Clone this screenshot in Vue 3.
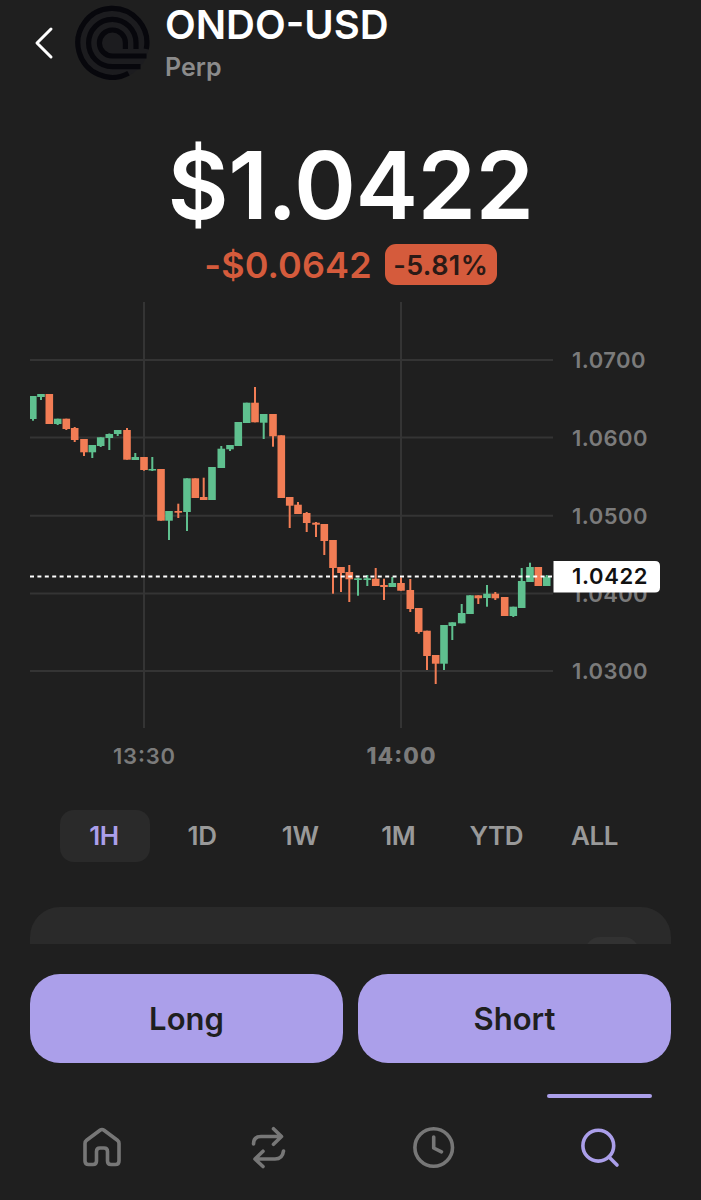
<template>
  <div class="app">
    <header class="header">
      <svg class="back" width="20" height="34" viewBox="0 0 20 34">
        <path d="M17 3 L3 17 L17 31" />
      </svg>
      <svg class="logo" width="75" height="75" viewBox="0 0 75 75">
        <circle class="disc" cx="37.3" cy="37.7" r="37" />
        <path d="M71.300 44 A34.500 34.500 0 1 0 53.500 68.300" />
        <path d="M61 44 V37.800 A23.700 23.700 0 1 0 37.300 61.700 H65.500" />
        <path d="M50.400 44 V37.800 A13 13 0 1 0 37.300 51 H71.500" />
      </svg>
      <div class="names">
        <div class="title">ONDO-USD</div>
        <div class="kind">Perp</div>
      </div>
    </header>

    <div class="price">$1.0422</div>
    <div class="change">
      <span class="diff">-$0.0642</span>
      <span class="badge">-5.81%</span>
    </div>

    <!-- K线图 -->
    <svg class="chart" width="701" height="485" viewBox="0 300 701 485">
      <g class="grid">
        <line v-for="p in prices" :key="p.label" x1="30" x2="553" :y1="p.y" :y2="p.y" />
        <line v-for="t in times" :key="t.label" :x1="t.x" :x2="t.x" y1="302" y2="728" />
      </g>
      <text v-for="p in prices" :key="p.label" class="axis" x="572" :y="p.y + 8" :textLength="p.width">{{ p.label }}</text>
      <text v-for="t in times" :key="t.label" class="axis time" :class="{ bold: t.bold }" :x="t.x" y="763.5" :textLength="t.width">{{ t.label }}</text>
      <g v-for="c in candles" :key="c[0]" :class="c[5] ? 'up' : 'down'">
        <rect :x="c[0] - 1" :y="c[1]" width="2" :height="c[4] - c[1]" />
        <rect :x="Math.max(c[0] - 3.8, 30)" :y="c[2]" :width="Math.min(7.6, c[0] - 26.4)" :height="c[3] - c[2]" />
      </g>
      <line class="current" x1="30" x2="553" y1="576.5" y2="576.5" />
      <path class="tag" d="M553.500 561 H655 Q660 561 660 566 V587.500 Q660 592.500 655 592.500 H553.500 Z" />
      <text class="axis now" x="572" y="584" textLength="75.500">1.0422</text>
    </svg>

    <div class="ranges">
      <button v-for="r in ranges" :key="r" :class="{ active: r === range }" @click="range = r">{{ r }}</button>
    </div>

    <div class="card">
      <div class="pill"></div>
    </div>

    <div class="actions">
      <button>Long</button>
      <button>Short</button>
    </div>

    <nav class="nav">
      <a>
        <svg width="44" height="44" viewBox="0 0 44 44">
          <path d="M5 18.500 Q5 16.500 6.600 15.300 L20 5.200 Q22 3.800 24 5.200 L37.400 15.300 Q39 16.500 39 18.500 V36 Q39 39.500 35.500 39.500 H31 Q27.500 39.500 27.500 36 V26.500 Q27.500 23 24 23 H20 Q16.500 23 16.500 26.500 V36 Q16.500 39.500 13 39.500 H8.500 Q5 39.500 5 36 Z" />
        </svg>
      </a>
      <a>
        <svg width="44" height="44" viewBox="0 0 44 44">
          <path d="M7.500 19 Q7.500 11.500 15 11.500 H35.500 M27.500 3.700 L35.500 11.500 L27.500 19.300 M37.500 26 Q36.500 34 29 34 H9 M17 26.200 L9 34 L17 41.500" />
        </svg>
      </a>
      <a>
        <svg width="44" height="44" viewBox="0 0 44 44">
          <circle cx="21.700" cy="22.500" r="18.800" />
          <path d="M21.700 12 V23 L29.500 26.800" />
        </svg>
      </a>
      <a class="active">
        <svg width="44" height="44" viewBox="0 0 44 44">
          <circle cx="20.300" cy="20.700" r="15.400" />
          <path d="M31 32 L39 40" />
        </svg>
      </a>
    </nav>
  </div>
</template>

<script setup>
import { ref } from 'vue';

const ranges = ['1H', '1D', '1W', '1M', 'YTD', 'ALL'];
const range = ref('1H');

const prices = [
  { label: '1.0700', y: 360, width: 73.5 },
  { label: '1.0600', y: 437.5, width: 75.5 },
  { label: '1.0500', y: 515.7, width: 75.5 },
  { label: '1.0400', y: 593.5, width: 75.5 },
  { label: '1.0300', y: 671, width: 75.5 }
];

const times = [
  { label: '13:30', x: 144, width: 62 },
  { label: '14:00', x: 401, width: 69, bold: true }
];

// [x, high, bodyTop, bodyBottom, low, up]
const candles = [
  [33, 396, 396, 419, 420.7, 1],
  [41, 394, 394, 397, 400, 1],
  [49.3, 394, 394, 424, 424, 0],
  [57.7, 418.7, 418.7, 424, 425, 1],
  [66.3, 418.7, 418.7, 429, 430, 0],
  [74.7, 427, 428, 440, 442, 0],
  [84, 439, 439, 452.3, 456, 0],
  [92.3, 445, 445, 452.3, 458, 1],
  [100.7, 437.3, 437.3, 446, 447, 1],
  [109.3, 433.5, 434, 438, 450, 1],
  [117.7, 430, 430, 434, 436, 1],
  [127, 428, 430, 459.7, 459.7, 0],
  [135.3, 453, 457, 460, 460, 1],
  [144, 457, 457, 470, 470.7, 0],
  [152.3, 457, 469, 470.5, 471, 1],
  [161, 469, 469, 520.7, 520.7, 0],
  [169, 511, 511, 520.7, 540, 1],
  [178.3, 503.7, 511, 512.7, 518, 0],
  [187, 478.3, 478.3, 512, 531, 1],
  [195.3, 478.3, 478.3, 498, 498, 0],
  [203.7, 477.7, 497, 500, 500, 0],
  [212, 467, 467, 500, 500, 1],
  [221.3, 446, 448.7, 468, 468, 1],
  [230, 445, 445, 449.3, 451, 1],
  [238.3, 422, 422, 446, 446, 1],
  [246.7, 402.7, 402.7, 423, 423, 1],
  [255, 387, 402.7, 422.3, 422.3, 0],
  [263.7, 414, 414, 422.7, 439, 1],
  [273, 414, 414, 436.3, 446.7, 0],
  [281.3, 435.3, 435.3, 498, 498, 0],
  [289.7, 497, 497, 505.7, 528, 0],
  [298, 502, 504.7, 514, 514, 0],
  [306.7, 512, 513, 523, 532, 0],
  [316, 522, 522.7, 524.7, 537, 0],
  [324.3, 524, 524, 541, 555, 0],
  [333, 540, 540, 568, 593.7, 0],
  [341, 567, 567, 573, 592, 0],
  [349.3, 565, 572, 579.3, 602, 0],
  [358, 577.7, 578.3, 580, 595.7, 1],
  [367.3, 575, 578.3, 580, 586, 1],
  [375.7, 568, 578.7, 586, 586, 0],
  [384, 578.7, 585, 587, 600, 0],
  [392.3, 577, 583, 587, 587, 1],
  [401, 577.3, 583, 590.7, 590.7, 0],
  [410.3, 579, 590, 609, 612, 0],
  [418.7, 608, 608, 632, 633.7, 0],
  [427, 630.7, 630.7, 656, 670, 0],
  [435.7, 655, 655, 663.7, 684, 0],
  [444, 625, 625, 663.7, 670, 1],
  [452.3, 622.3, 622.3, 626, 640, 1],
  [461.7, 604, 613, 623.3, 623.3, 1],
  [470, 595.3, 595.3, 614, 614, 1],
  [478.3, 595.3, 595.3, 598.3, 604, 0],
  [487, 585, 593.7, 598, 606.7, 1],
  [495.3, 592, 593.7, 598.3, 600, 0],
  [504.7, 597, 597, 616, 616, 0],
  [513.3, 606.7, 606.7, 616, 617, 1],
  [521.7, 568, 581, 608, 608, 1],
  [530, 562.7, 567, 582, 582, 1],
  [538.3, 567, 567, 586, 586, 0],
  [546.7, 575, 576.7, 586, 586, 1]
];
</script>

<style>
body {
  margin: 0;
  background: #1f1f1f;
}
</style>

<style scoped>
.app {
  width: 701px;
  height: 1200px;
  overflow: hidden;
  background: #1f1f1f;
  color: #fff;
  font-family: Inter, "Liberation Sans", sans-serif;
}

button {
  border: none;
  padding: 0;
  font-family: inherit;
  cursor: pointer;
}

.header {
  display: flex;
  height: 130px;
  padding-left: 34px;
}

.back {
  margin-top: 26px;
  fill: none;
  stroke: #fff;
  stroke-width: 3;
  stroke-linecap: round;
  stroke-linejoin: round;
}

.logo {
  margin: 5px 0 0 21px;
  fill: none;
  stroke: #07070c;
  stroke-width: 5.2;
}

.logo .disc {
  fill: #1c1c1f;
  stroke: none;
}

.names {
  margin-left: 15px;
}

.title {
  height: 50px;
  font-size: 40px;
  line-height: 49px;
  font-weight: 600;
  white-space: nowrap;
}

.kind {
  height: 34px;
  font-size: 25px;
  line-height: 35px;
  font-weight: 600;
  color: #8b8b8b;
}

.price {
  height: 110px;
  font-size: 94px;
  line-height: 110px;
  font-weight: 600;
  letter-spacing: -0.6px;
  text-align: center;
}

.change {
  display: flex;
  align-items: center;
  justify-content: center;
  gap: 13px;
  height: 60px;
  margin-top: -5px;
  padding-bottom: 5px;
}

.diff {
  font-size: 36px;
  font-weight: 600;
  letter-spacing: 0.1px;
  color: #d55b3c;
}

.badge {
  width: 112px;
  height: 41px;
  margin-bottom: 2px;
  border-radius: 11px;
  background: #d55b3c;
  color: #2b1a16;
  font-size: 27px;
  line-height: 43px;
  font-weight: 600;
  letter-spacing: 0.4px;
  text-align: center;
}

.chart {
  display: block;
}

.grid {
  stroke: #343434;
  stroke-width: 2;
}

.axis {
  fill: #7b7b7b;
  font-size: 22px;
  font-weight: 600;
}

.time {
  text-anchor: middle;
}

.bold {
  font-size: 22.5px;
  font-weight: 800;
}

.now {
  fill: #111;
}

.up {
  fill: #5fc08f;
}

.down {
  fill: #f27d55;
}

.current {
  stroke: #fff;
  stroke-width: 2;
  stroke-dasharray: 4 3.4;
}

.tag {
  fill: #fff;
}

.ranges {
  display: grid;
  grid-template-columns: repeat(6, 90px);
  column-gap: 8.1px;
  padding: 25px 0 45px 60px;
}

.ranges button {
  height: 52px;
  padding: 0 2px 2px 0;
  border-radius: 14px;
  background: none;
  color: #999;
  font-size: 26px;
  font-weight: 600;
  letter-spacing: -0.4px;
}

.ranges button.active {
  background: #2a2a2a;
  color: #ab9fea;
}

.card {
  height: 37px;
  margin: 0 30px;
  border-radius: 30px 30px 0 0;
  background: #2a2a2a;
  overflow: hidden;
}

.pill {
  width: 54px;
  height: 30px;
  margin: 30px 32px 0 auto;
  border-radius: 15px;
  background: #323232;
}

.actions {
  display: flex;
  gap: 15px;
  padding: 30px 30px 0;
}

.actions button {
  flex: 1;
  height: 89px;
  border-radius: 30px;
  background: #ab9fea;
  color: #1f1f1f;
  font-size: 31px;
  font-weight: 600;
}

.nav {
  display: grid;
  grid-template-columns: repeat(4, 166px);
  margin-top: 31px;
  padding-left: 18.5px;
}

.nav a {
  display: flex;
  flex-direction: column;
  align-items: center;
  padding-top: 31px;
}

.nav svg {
  fill: none;
  stroke: #777;
  stroke-width: 3.6;
  stroke-linecap: round;
  stroke-linejoin: round;
}

.nav .active {
  padding-top: 0;
}

.nav .active::before {
  content: "";
  width: 105px;
  height: 4px;
  margin-bottom: 27px;
  border-radius: 2px;
  background: #ab9fea;
}

.nav .active svg {
  stroke: #ab9fea;
}
</style>
